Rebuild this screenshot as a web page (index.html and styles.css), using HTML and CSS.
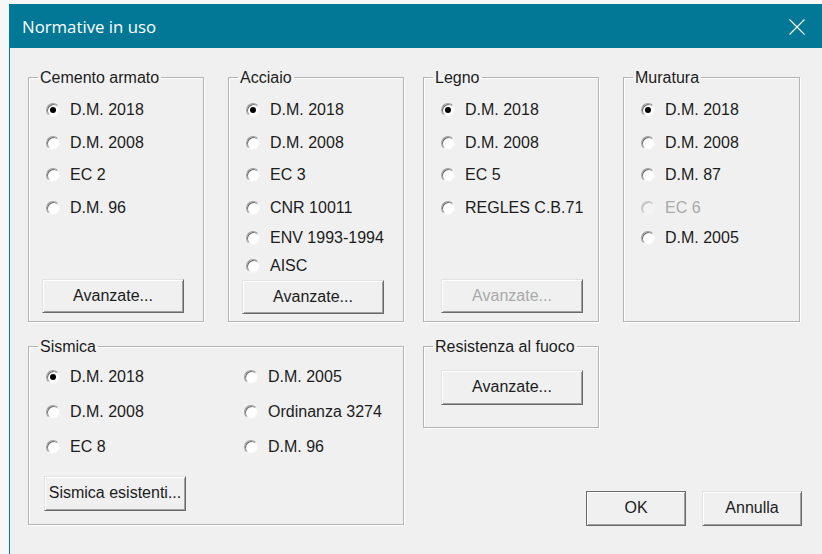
FILE: index.html
```html
<!DOCTYPE html>
<html lang="it">
<head>
<meta charset="utf-8">
<title>Normative in uso</title>
<link rel="stylesheet" href="styles.css">
</head>
<body>
<div class="window">
  <header class="titlebar">
    <span class="title">Normative in uso</span>
    <span class="close" aria-label="Chiudi">
      <svg width="16" height="16" viewBox="0 0 16 16"><path d="M0.5 0.5 L15.5 15.5 M15.5 0.5 L0.5 15.5" stroke="#fff" stroke-width="1.1" fill="none"/></svg>
    </span>
  </header>

  <div class="dialog">
    <fieldset class="group top c1">
      <legend><span>Cemento armato</span></legend>
      <div class="options">
        <div class="opt"><span class="radio on"></span>D.M. 2018</div>
        <div class="opt"><span class="radio"></span>D.M. 2008</div>
        <div class="opt"><span class="radio"></span>EC 2</div>
        <div class="opt"><span class="radio"></span>D.M. 96</div>
      </div>
      <button class="btn adv">Avanzate...</button>
    </fieldset>

    <fieldset class="group top c2">
      <legend><span>Acciaio</span></legend>
      <div class="options">
        <div class="opt"><span class="radio on"></span>D.M. 2018</div>
        <div class="opt"><span class="radio"></span>D.M. 2008</div>
        <div class="opt"><span class="radio"></span>EC 3</div>
        <div class="opt"><span class="radio"></span>CNR 10011</div>
        <div class="opt tight"><span class="radio"></span>ENV 1993-1994</div>
        <div class="opt tight"><span class="radio"></span>AISC</div>
      </div>
      <button class="btn adv">Avanzate...</button>
    </fieldset>

    <fieldset class="group top c3">
      <legend><span>Legno</span></legend>
      <div class="options">
        <div class="opt"><span class="radio on"></span>D.M. 2018</div>
        <div class="opt"><span class="radio"></span>D.M. 2008</div>
        <div class="opt"><span class="radio"></span>EC 5</div>
        <div class="opt"><span class="radio"></span>REGLES C.B.71</div>
      </div>
      <button class="btn adv wide-inset" disabled>Avanzate...</button>
    </fieldset>

    <fieldset class="group top c4">
      <legend><span>Muratura</span></legend>
      <div class="options">
        <div class="opt"><span class="radio on"></span>D.M. 2018</div>
        <div class="opt"><span class="radio"></span>D.M. 2008</div>
        <div class="opt"><span class="radio"></span>D.M. 87</div>
        <div class="opt disabled"><span class="radio"></span>EC 6</div>
        <div class="opt tight"><span class="radio"></span>D.M. 2005</div>
      </div>
    </fieldset>

    <fieldset class="group seismic">
      <legend><span>Sismica</span></legend>
      <div class="options two-col">
        <div class="opt"><span class="radio on"></span>D.M. 2018</div>
        <div class="opt"><span class="radio"></span>D.M. 2005</div>
        <div class="opt"><span class="radio"></span>D.M. 2008</div>
        <div class="opt"><span class="radio"></span>Ordinanza 3274</div>
        <div class="opt"><span class="radio"></span>EC 8</div>
        <div class="opt"><span class="radio"></span>D.M. 96</div>
      </div>
      <button class="btn existing">Sismica esistenti...</button>
    </fieldset>

    <div class="side">
      <fieldset class="group fire">
        <legend><span>Resistenza al fuoco</span></legend>
        <button class="btn adv wide-inset">Avanzate...</button>
      </fieldset>
      <div class="actions">
        <button class="btn action default">OK</button>
        <button class="btn action">Annulla</button>
      </div>
    </div>
  </div>
</div>
</body>
</html>
```

FILE: styles.css
```css
html, body {
  margin: 0;
  padding: 0;
}

body {
  background: #f7f7f7;
  width: 822px;
  height: 554px;
  overflow: hidden;
}

.window {
  margin: 4px 0 0 9px;
  height: 550px;
  background: #f0f0f0;
  border-left: 1px solid #037896;
  font-family: "Liberation Sans", Arial, sans-serif;
  font-size: 16px;
  color: #1c1c1c;
}

/* caption bar */
.titlebar {
  height: 44px;
  background: #037896;
  display: flex;
  align-items: center;
  justify-content: space-between;
  padding: 0 17px 0 12px;
}

.title {
  font-family: "Open Sans", "Noto Sans", sans-serif;
  font-size: 16.8px;
  color: #fff;
  margin-top: 1px;
}

.close {
  display: flex;
  width: 16px;
  height: 16px;
  margin-top: 1px;
}

/* dialog body */
.dialog {
  display: grid;
  grid-template-columns: 176px 24px 176px 19px 176px 24px 177px;
  align-items: start;
  row-gap: 15px;
  padding: 20px 0 0 18px;
}

.c1 { grid-column: 1; }
.c2 { grid-column: 3; }
.c3 { grid-column: 5; }
.c4 { grid-column: 7; }
.seismic { grid-column: 1 / 4; }
.side { grid-column: 5 / 8; }

/* etched group box */
.group {
  box-sizing: border-box;
  margin: 0;
  padding: 0;
  min-width: 0;
  border: 1px solid #b4b4b4;
  box-shadow: 1px 1px 0 #fff, inset 1px 1px 0 #fff;
  display: flex;
  flex-direction: column;
  align-items: flex-start;
}

.group legend {
  margin-left: 9px;
  padding: 0 2px;
  line-height: 18px;
  font-size: 16px;
}

.group legend span {
  display: block;
  transform: translateY(1px);
}

.top { height: 254px; }

.options {
  display: flex;
  flex-direction: column;
  padding-top: 8px;
  align-self: stretch;
}

.opt {
  height: 32.6px;
  display: flex;
  align-items: center;
  white-space: nowrap;
}

.opt.tight { height: 28px; }

.opt.disabled { color: #a9a9a9; }

/* classic radio button */
.radio {
  box-sizing: border-box;
  width: 14px;
  height: 14px;
  border-radius: 50%;
  background: #fff;
  border: 1px solid;
  border-color: #a0a0a0 #f4f4f4 #f4f4f4 #a0a0a0;
  box-shadow: inset 1px 1px 0 #6f6f6f;
  margin: 0 10px 0 17px;
  display: flex;
  align-items: center;
  justify-content: center;
  flex: none;
}

.radio.on::after {
  content: "";
  width: 6px;
  height: 6px;
  border-radius: 50%;
  background: #000;
}

.disabled .radio {
  background: #f3f3f3;
  border-color: #c8c8c8 #f3f3f3 #f3f3f3 #c8c8c8;
  box-shadow: inset 1px 1px 0 #bdbdbd;
}

/* push buttons */
.btn {
  box-sizing: border-box;
  font-family: "Liberation Sans", Arial, sans-serif;
  font-size: 16px;
  color: #1c1c1c;
  background: #f0f0f0;
  border: 1px solid;
  border-color: #e3e3e3 #696969 #696969 #e3e3e3;
  box-shadow: inset 1px 1px 0 #fff, inset -1px -1px 0 #a0a0a0;
  padding: 0 0 1px;
  height: 34px;
  flex: none;
}

.btn:disabled { color: #a9a9a9; }

.adv {
  width: 142px;
  margin: auto 0 8px 13px;
}

.adv.wide-inset { margin-left: 17px; }

/* Sismica */
.seismic { height: 188px; }

.two-col {
  display: grid;
  grid-template-columns: 198px auto;
  padding-top: 4px;
}

.two-col .opt { height: 35px; }

.existing {
  width: 142px;
  height: 35px;
  margin: 12px 0 0 15px;
}

/* right column */
.side {
  display: flex;
  flex-direction: column;
  align-items: flex-start;
}

.fire {
  width: 176px;
  height: 91px;
}

.fire .adv {
  margin: 15px 0 0 17px;
  height: 35px;
}

.actions {
  align-self: stretch;
  display: flex;
  justify-content: flex-end;
  gap: 16px;
  margin: 63px -2px 0 0;
}

.action {
  width: 100px;
  height: 35px;
}

.action.default {
  border-color: #6a6a6a;
}
```
